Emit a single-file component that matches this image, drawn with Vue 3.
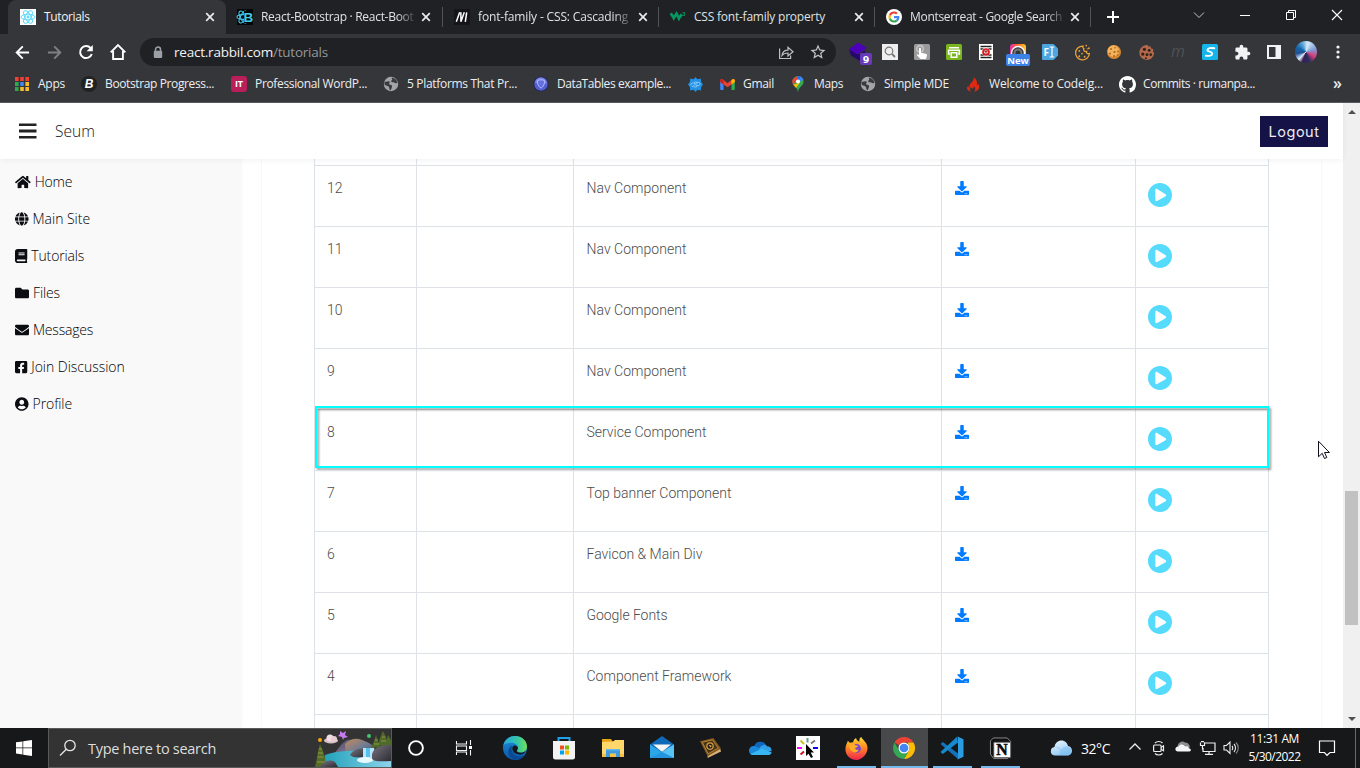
<script setup>
import { h } from 'vue'

const FA = (d, fill = 'currentColor') => `<path fill="${fill}" d="${d}"/>`

const art = {
  home: ['0 0 576 512', FA('M280.37 148.26L96 300.11V464a16 16 0 0 0 16 16l112.06-.29a16 16 0 0 0 15.92-16V368a16 16 0 0 1 16-16h64a16 16 0 0 1 16 16v95.64a16 16 0 0 0 16 16.05L464 480a16 16 0 0 0 16-16V300L295.67 148.26a12.19 12.19 0 0 0-15.3 0zM571.6 251.47L488 182.56V44.05a12 12 0 0 0-12-12h-56a12 12 0 0 0-12 12v72.61L318.47 43a48 48 0 0 0-61 0L4.34 251.47a12 12 0 0 0-1.6 16.9l25.5 31A12 12 0 0 0 45.15 301l235.22-193.74a12.19 12.19 0 0 1 15.3 0L530.9 301a12 12 0 0 0 16.9-1.6l25.5-31a12 12 0 0 0-1.7-16.93z')],
  globe: ['0 0 496 512', FA('M336.5 160C322 70.7 287.8 8 248 8s-74 62.7-88.5 152h177zM152 256c0 22.2 1.2 43.5 3.3 64h185.3c2.1-20.5 3.3-41.8 3.3-64s-1.2-43.5-3.3-64H155.3c-2.1 20.5-3.3 41.8-3.3 64zm324.7-96c-28.6-67.9-86.5-120.4-158-141.6 24.4 33.8 41.2 84.7 50 141.6h108zM177.2 18.4C105.8 39.6 47.8 92.1 19.3 160h108c8.7-56.9 25.5-107.8 49.9-141.6zM487.4 192H372.7c2.1 21 3.3 42.5 3.3 64s-1.2 43-3.3 64h114.6c5.5-20.5 8.6-41.8 8.6-64s-3.1-43.5-8.5-64zM120 256c0-21.5 1.2-43 3.3-64H8.6C3.2 212.5 0 233.8 0 256s3.2 43.5 8.6 64h114.6c-2-21-3.2-42.5-3.2-64zm39.5 96c14.5 89.3 48.7 152 88.5 152s74-62.7 88.5-152h-177zm159.3 141.6c71.4-21.2 129.4-73.7 158-141.6h-108c-8.8 56.9-25.6 107.8-50 141.6zM19.3 352c28.6 67.9 86.5 120.4 158 141.6-24.4-33.8-41.2-84.7-50-141.6h-108z')],
  book: ['0 0 448 512', FA('M448 360V24c0-13.3-10.7-24-24-24H96C43 0 0 43 0 96v320c0 53 43 96 96 96h328c13.3 0 24-10.7 24-24v-16c0-7.5-3.5-14.3-8.9-18.7-4.2-15.4-4.2-59.3 0-74.7 5.4-4.3 8.9-11.1 8.9-18.6zM128 134c0-3.3 2.7-6 6-6h212c3.3 0 6 2.7 6 6v20c0 3.3-2.7 6-6 6H134c-3.3 0-6-2.7-6-6v-20zm0 64c0-3.3 2.7-6 6-6h212c3.3 0 6 2.7 6 6v20c0 3.3-2.7 6-6 6H134c-3.3 0-6-2.7-6-6v-20zm253.4 250H96c-17.7 0-32-14.3-32-32 0-17.6 14.4-32 32-32h285.4c-1.9 17.1-1.9 46.9 0 64z')],
  folder: ['0 0 512 512', FA('M464 128H272l-64-64H48C21.49 64 0 85.49 0 112v288c0 26.51 21.49 48 48 48h416c26.51 0 48-21.49 48-48V176c0-26.51-21.49-48-48-48z')],
  envelope: ['0 0 512 512', FA('M502.3 190.8c3.9-3.1 9.7-.2 9.7 4.7V400c0 26.5-21.5 48-48 48H48c-26.5 0-48-21.5-48-48V195.6c0-5 5.7-7.8 9.7-4.7 22.4 17.4 52.1 39.5 154.1 113.6 21.1 15.4 56.7 47.8 92.2 47.6 35.7.3 72-32.8 92.3-47.6 102-74.1 131.6-96.3 154-113.7zM256 320c23.2.4 56.6-29.2 73.4-41.4 132.7-96.3 142.8-104.7 173.4-128.7 5.8-4.5 9.2-11.5 9.2-18.9v-19c0-26.5-21.5-48-48-48H48c-26.5 0-48 21.5-48 48v19c0 7.4 3.4 14.3 9.2 18.9 30.6 23.9 40.7 32.4 173.4 128.7 16.8 12.2 50.2 41.8 73.4 41.4z')],
  facebook: ['0 0 448 512', FA('M400 32H48A48 48 0 0 0 0 80v352a48 48 0 0 0 48 48h137.25V327.69h-63V256h63v-54.64c0-62.15 37-96.48 93.67-96.48 27.14 0 55.52 4.84 55.52 4.84v61h-31.27c-30.81 0-40.42 19.12-40.42 38.73V256h68.78l-11 71.69h-57.78V480H400a48 48 0 0 0 48-48V80a48 48 0 0 0-48-48z')],
  user: ['0 0 496 512', FA('M248 8C111 8 0 119 0 256s111 248 248 248 248-111 248-248S385 8 248 8zm0 96c48.6 0 88 39.4 88 88s-39.4 88-88 88-88-39.4-88-88 39.4-88 88-88zm0 344c-58.7 0-111.3-26.6-146.5-68.2 18.8-35.4 55.6-59.8 98.5-59.8 2.4 0 4.8.4 7.1 1.1 13 4.2 26.6 6.9 40.9 6.9 14.3 0 28-2.7 40.9-6.9 2.3-.7 4.7-1.1 7.1-1.1 42.9 0 79.7 24.4 98.5 59.8C359.3 421.4 306.7 448 248 448z')],
  download: ['0 0 512 512', FA('M216 0h80c13.3 0 24 10.7 24 24v168h87.7c17.8 0 26.7 21.5 14.1 34.1L269.7 378.3c-7.5 7.5-19.8 7.5-27.3 0L90.1 226.1c-12.6-12.6-3.7-34.1 14.1-34.1H192V24c0-13.3 10.7-24 24-24zm296 376v112c0 13.3-10.7 24-24 24H24c-13.3 0-24-10.7-24-24V376c0-13.3 10.7-24 24-24h146.7l49 49c20.1 20.1 52.5 20.1 72.6 0l49-49H488c13.3 0 24 10.7 24 24zm-124 88c0-11-9-20-20-20s-20 9-20 20 9 20 20 20 20-9 20-20zm64 0c0-11-9-20-20-20s-20 9-20 20 9 20 20 20 20-9 20-20z', '#007bff')],
  play: ['8 8 496 496', FA('M256 8C119 8 8 119 8 256s111 248 248 248 248-111 248-248S393 8 256 8zm115.7 272l-176 101c-15.8 8.8-35.7-2.5-35.7-21V152c0-18.4 19.8-29.8 35.7-21l176 107c16.4 9.2 16.4 32.9 0 42z', '#56dbfd')],
  menu: ['0 0 18 16', '<path fill="#232323" d="M0 .5h17.500v2.6H0zM0 6.6h17.500v2.8H0zM0 12.9h17.500v2.6H0z"/>'],
  cursor: ['0 0 14 20', '<path fill="#fff" stroke="#10101c" d="M1.5 1.2v15.6l3.7-3.5 2.3 5.2 2.3-1-2.3-5h4.9z"/>'],

  react: ['0 0 16 16', '<path fill="#fff" d="M0 0h16v16H0z"/><g fill="none" stroke="#61dafb"><ellipse cx="8" cy="8" rx="7" ry="2.8"/><ellipse cx="8" cy="8" rx="7" ry="2.8" transform="rotate(60 8 8)"/><ellipse cx="8" cy="8" rx="7" ry="2.8" transform="rotate(120 8 8)"/></g><circle cx="8" cy="8" r="1.4" fill="#61dafb"/>'],
  rbs: ['0 0 16 16', '<path fill="#050708" d="M0 0h16v16H0z"/><g fill="none" stroke="#41c9e6" stroke-width="1.1"><ellipse cx="6" cy="8" rx="6" ry="2.4"/><ellipse cx="6" cy="8" rx="6.6" ry="2.6" transform="rotate(62 6 8)"/><ellipse cx="6" cy="8" rx="6.6" ry="2.6" transform="rotate(118 6 8)"/></g><path fill="#050708" d="M7 2h9v12H7z"/><text x="6.500" y="13" font-family="Liberation Sans" font-size="13.500" font-weight="700" fill="#41c9e6">B</text>'],
  mdn: ['0 0 16 16', '<path fill="#15141a" d="M0 0h16v16H0z"/><path fill="none" stroke="#fff" stroke-width="1.500" d="M2.300 12.800L5.700 3.300M6.900 12.800V3.300M6.900 12.800L10.300 3.300M11.300 12.800L12.700 3.300"/>'],
  w3: ['0 0 17 16', '<path fill="none" stroke="#059862" stroke-width="2.900" stroke-linejoin="miter" d="M.8 4l3.200 5 2.900-4.500L9.500 9.500 12.500 5"/><path fill="#059862" d="M2.500 7h2.500l-1 5.500zM8 7h3l-1.500 6z"/><text x="13" y="6.600" font-family="Liberation Sans" font-size="6" font-weight="700" fill="#059862">3</text>'],
  google: ['0 0 48 48', '<circle cx="24" cy="24" r="24" fill="#fff"/><g transform="translate(7.2 7.2) scale(.7)"><path fill="#EA4335" d="M24 9.5c3.54 0 6.71 1.22 9.21 3.6l6.85-6.85C35.9 2.38 30.47 0 24 0 14.62 0 6.51 5.38 2.56 13.22l7.98 6.19C12.43 13.72 17.74 9.5 24 9.5z"/><path fill="#4285F4" d="M46.98 24.55c0-1.57-.15-3.09-.38-4.55H24v9.02h12.94c-.58 2.96-2.26 5.48-4.78 7.18l7.73 6c4.51-4.18 7.09-10.36 7.09-17.65z"/><path fill="#FBBC05" d="M10.53 28.59c-.48-1.45-.76-2.99-.76-4.59s.27-3.14.76-4.59l-7.98-6.19C.92 16.46 0 20.12 0 24c0 3.88.92 7.54 2.56 10.78l7.97-6.19z"/><path fill="#34A853" d="M24 48c6.48 0 11.93-2.13 15.89-5.81l-7.73-6c-2.15 1.45-4.92 2.3-8.16 2.3-6.26 0-11.57-4.22-13.47-9.91l-7.98 6.19C6.51 42.62 14.62 48 24 48z"/></g>'],
  x: ['0 0 10 10', '<path stroke="#e8eaed" stroke-width="1.7" d="M1.2 1.2l7.6 7.6M8.8 1.2L1.2 8.8"/>'],
  plus: ['0 0 12 12', '<path stroke="#fff" stroke-width="2" d="M6 0v12M0 6h12"/>'],
  chev: ['0 0 12 12', '<path fill="none" stroke="#c4c5c7" d="M1 3.5l5 5 5-5"/>'],
  min: ['0 0 12 12', '<path stroke="#fff" d="M1 6.5h10"/>'],
  restore: ['0 0 12 12', '<path fill="none" stroke="#fff" d="M1.5 3.5h7v7h-7zM3.5 3.5v-2h7v7h-2"/>'],
  close: ['0 0 12 12', '<path stroke="#fff" stroke-width="1.1" d="M1 1l10 10M11 1L1 11"/>'],

  back: ['0 0 16 16', '<path fill="none" stroke="#fff" stroke-width="2" d="M15 8H2.5M8.3 1.5L1.8 8l6.500 6.500"/>'],
  fwd: ['0 0 16 16', '<path fill="none" stroke="#7f8083" stroke-width="2" d="M1 8h12.500M7.700 1.500L14.200 8l-6.500 6.500"/>'],
  reload: ['0 0 16 16', '<path fill="none" stroke="#fff" stroke-width="2" d="M13.800 10A6 6 0 1 1 12.600 4"/><path fill="#fff" d="M14.800 1v6.200H8.600z"/>'],
  house: ['0 0 18 18', '<path fill="none" stroke="#fff" stroke-width="1.900" d="M1.700 9.300L9 2l7.300 7.300M4.100 8v8h9.800V8"/>'],
  lock: ['0 0 10 13', '<path fill="none" stroke="#9aa0a6" stroke-width="1.500" d="M2.500 6V3.600a2.500 2.500 0 0 1 5 0V6"/><rect x=".8" y="4.800" width="8.400" height="7.200" rx="1" fill="#9aa0a6"/>'],
  share: ['0 0 16 16', '<g fill="none" stroke="#bdc1c6" stroke-width="1.200"><path d="M1.600 4.500v10h11v-3"/><path d="M4 11.500c.5-3.600 2.500-5.300 6-5.300V3.300l5 4.400-5 4.300V9C7.500 9 5.500 9.600 4 11.500z"/></g>'],
  star: ['0 0 24 24', FA('M22 9.240l-7.190-.62L12 2 9.190 8.630 2 9.240l5.460 4.730L5.820 21 12 17.270 18.180 21l-1.630-7.030L22 9.240zM12 15.400l-3.760 2.270 1-4.280-3.320-2.880 4.380-.38L12 6.100l1.710 4.040 4.380.38-3.320 2.880 1 4.280L12 15.400z', '#c4c7ca')],

  layers: ['0 0 24 24', '<path fill="#25086b" d="M1 7.500l10 5 6-4v5l-6 5-8-5z"/><path fill="#4c00b8" d="M10 .5l9 5.500-10 6.500L1 7z"/><rect x="12" y="11" width="12" height="12" rx="2" fill="#673ab7"/><text x="18" y="20.500" font-family="DejaVu Sans" font-size="9.500" font-weight="700" text-anchor="middle" fill="#fff">9</text>'],
  lens: ['0 0 16 16', '<path fill="#eee" d="M0 0h16v16H0z"/><circle cx="7" cy="7" r="3.800" fill="none" stroke="#777" stroke-width="1.200"/><path stroke="#777" stroke-width="1.800" d="M10 10l3 3"/>'],
  hand: ['0 0 16 16', '<rect width="16" height="16" rx="1.500" fill="#9b9b9b"/><circle cx="6" cy="4.800" r="3.300" fill="none" stroke="#c9c9c9" stroke-width="1.300"/><path fill="#fff" d="M5 4.800c0-1.500 2-1.500 2 0v4l4.700.9c1.200.3 1.400 1 1.200 2L12 15H6.500L3 11.500c-.5-1 .5-1.600 1.200-1l.8.800z"/>'],
  printer: ['0 0 16 16', '<rect width="16" height="16" rx="1.500" fill="#79b51d"/><path fill="none" stroke="#fff" stroke-width="1.500" d="M3 3.700h10M4 10H2.600V6.200h10.800V10H12M5.200 8.700h5.600v4.600H5.200z"/>'],
  blocker: ['0 0 14 16', '<path fill="#fff" d="M0 0h14v16H0z"/><path stroke="#222" stroke-width="1.300" d="M1.500 2.500h11M1.500 5h11M1.500 11h11M1.500 13.500h11"/><circle cx="7" cy="8" r="4.400" fill="#fff"/><circle cx="7" cy="8" r="3" fill="#ddd" stroke="#d31920" stroke-width="1.700"/><path stroke="#d31920" stroke-width="1.300" d="M5.500 6.500l3 3M8.500 6.500l-3 3"/>'],
  camera: ['0 0 24 24', '<defs><linearGradient id="cam"><stop stop-color="#e62ca6"/><stop offset=".5" stop-color="#ff6c24"/><stop offset="1" stop-color="#ffcd2e"/></linearGradient></defs><rect x="4" y="0" width="16" height="16" rx="3" fill="url(#cam)"/><circle cx="12" cy="9" r="6.500" fill="#35363a" stroke="#fff" stroke-width="1.400"/><circle cx="12" cy="9" r="3.500" fill="none" stroke="#777" stroke-width="2"/><rect x="0" y="10" width="24" height="12" rx="1.800" fill="#3b82e8"/><text x="12" y="19.500" font-family="Open Sans" font-size="9.500" font-weight="700" text-anchor="middle" fill="#fff">New</text>'],
  fi: ['0 0 16 16', '<path fill="#4da6e0" d="M1 0h10.500L16 4.500v7L11.500 16H1a1 1 0 0 1-1-1V1a1 1 0 0 1 1-1z"/><text x="1.500" y="11.700" font-family="Open Sans" font-size="10" font-weight="700" fill="#fff">F</text><path fill="none" stroke="#fff" stroke-width="1.200" d="M7.700 3h4.600M7.700 13h4.600M10 3v10"/>'],
  cookieLine: ['0 0 16 16', '<path fill="none" stroke="#e8a33a" stroke-width="1.200" d="M8.500 2A6.500 6.500 0 1 0 14.500 9c-2 .5-3-.5-2.700-2-2 .4-3.300-1-2.500-2.700C8.200 4 8 3 8.500 2z"/><g fill="#e8a33a"><circle cx="5" cy="6.500" r=".9"/><circle cx="7.500" cy="9" r=".8"/><circle cx="5" cy="11.500" r=".9"/><circle cx="10" cy="12" r=".9"/><circle cx="11.500" cy="1.500" r=".8"/><circle cx="14" cy="4" r=".9"/><circle cx="12.500" cy="4.500" r=".6"/></g>'],
  cookie: ['0 0 16 16', '<circle cx="8" cy="8" r="7" fill="#d98a2f"/><circle cx="7.300" cy="7" r="5.700" fill="#f2b35a"/><g fill="#a8601f"><circle cx="5" cy="5" r=".9"/><circle cx="9" cy="3.800" r=".8"/><circle cx="8.500" cy="8" r="1.100"/><circle cx="4" cy="9.500" r=".9"/><circle cx="12" cy="7.500" r=".9"/><circle cx="8" cy="12" r=".9"/><circle cx="11.500" cy="11" r=".8"/></g>'],
  cookieBite: ['0 0 16 16', '<path fill="#b5694b" d="M9 1l1 1.500 2-.5 0 2 2.500 1-.5 2 1.200 1.500A7 7 0 1 1 9 1z"/><g fill="#2f211c"><circle cx="6" cy="5" r="1.500"/><circle cx="10.500" cy="6" r="1.400"/><circle cx="4.500" cy="9.500" r="1.500"/><circle cx="8.500" cy="10" r="1.400"/><circle cx="12" cy="10" r="1.200"/><circle cx="7.500" cy="13.300" r=".9"/></g>'],
  m: ['0 0 16 16', '<text x="8" y="12.500" font-family="Open Sans" font-size="16" font-style="italic" text-anchor="middle" fill="#505154">m</text>'],
  s: ['0 0 16 16', '<rect width="16" height="16" rx="1.500" fill="#13b5ea"/><path fill="none" stroke="#fff" stroke-width="1.900" stroke-linecap="round" d="M12.300 4.300C9 3.600 5.500 4 5.300 6c-.2 1.600 5 1.600 5 3.500 0 2.200-3.500 2.600-6.500 2.200"/>'],
  puzzle: ['0 0 24 24', FA('M20.500 11H19V7c0-1.100-.9-2-2-2h-4V3.500C13 2.120 11.880 1 10.500 1S8 2.120 8 3.500V5H4c-1.100 0-1.990.9-1.990 2v3.800H3.500c1.490 0 2.700 1.210 2.700 2.700s-1.210 2.700-2.700 2.700H2V20c0 1.100.9 2 2 2h3.800v-1.500c0-1.490 1.210-2.700 2.700-2.700 1.490 0 2.700 1.210 2.700 2.700V22H17c1.100 0 2-.9 2-2v-4h1.500c1.380 0 2.500-1.120 2.500-2.500S21.880 11 20.500 11z', '#f1f3f4')],
  panel: ['0 0 14 14', '<path fill="#f1f3f4" fill-rule="evenodd" d="M0 0h14v14H0zM2 2v10h6.500V2z"/>'],
  dots: ['0 0 4 16', '<g fill="#f1f3f4"><circle cx="2" cy="3" r="1.600"/><circle cx="2" cy="8" r="1.600"/><circle cx="2" cy="13" r="1.600"/></g>'],

  apps: ['0 0 14 14', '<path fill="#ee4035" d="M0 0h3.600v4H0zM5.200 0h3.600v4H5.200zM10.400 0H14v4h-3.600z"/><path fill="#2ea94f" d="M0 5h3.600v4H0zM0 10h3.600v4H0z"/><path fill="#4285f4" d="M5.200 5h3.600v4H5.200z"/><path fill="#f9bb2d" d="M10.400 5H14v4h-3.600zM5.200 10h3.600v4H5.200zM10.400 10H14v4h-3.600z"/>'],
  b: ['0 0 16 16', '<circle cx="8" cy="8" r="8" fill="#222"/><text x="8" y="12.300" font-family="Liberation Sans" font-size="12" font-weight="700" font-style="italic" text-anchor="middle" fill="#fff">B</text>'],
  it: ['0 0 16 16', '<rect width="16" height="16" rx="3" fill="#b9205b"/><text x="8" y="11" font-family="Open Sans" font-size="9" font-weight="700" text-anchor="middle" fill="#fff">IT</text>'],
  world: ['0 0 16 16', '<circle cx="8" cy="8" r="7.200" fill="#a1a5aa"/><path fill="#393b3f" d="M1.800 5.500c1.500.5 2.800-.3 4-.2 1 0 1.300 1 .6 1.800s-.3 1.700.9 1.700 2 .7 1.700 2-.9 2-1 3.500c-1.500-.3-1.900-1.600-1.900-2.800S4.500 9.700 3 9.400 1 8 1.800 5.500zM9 1.500l3 1.200c1.700 1.100 2.200 2.600 2.300 4-1 .8-2.300.6-3.200-.1s-2.400.2-2.800-.8.8-1.300.9-2.200S8.300 2.500 9 1.500z"/>'],
  dt: ['0 0 16 16', '<circle cx="8" cy="8" r="7.200" fill="#5360d3" stroke="#24284e"/><path fill="#7b86e8" d="M8 1.500a6.500 6.500 0 0 1 6 6L2 7a6.500 6.500 0 0 1 6-5.500z"/><path fill="#6670dc" stroke="#c3c8ff" stroke-width=".8" d="M4.500 4.600c2-1 5-1 7 0 .4 3.300-1 6-3.500 7.600-2.500-1.600-3.900-4.300-3.500-7.600z"/>'],
  flower: ['0 0 16 16', '<path fill="#2492e4" d="M8 0l2 2.300 3.600-.6.400 3.600L16 8l-2 2.700-.4 3.600-3.600-.6L8 16l-2-2.300-3.600.6L2 10.700 0 8l2-2.700.4-3.600 3.600.6z"/><path fill="none" stroke="#a9dcff" stroke-width=".8" d="M3 8.500c0-2.500 3.500-2.800 5-.8s4 2 5-.3c0-2-3-2.500-4.500-.5s-3.500 4-4.700 2.600M6.500 5.800c1.500-1 3.500-.5 3.500 1M6 10.200c1.500 1 4 .5 4-1.500"/>'],
  gmail: ['0 0 16 12', '<path fill="#4285f4" d="M0 2v9a1 1 0 0 0 1 1h2.700V4.700z"/><path fill="#34a853" d="M12.300 4.700V12H15a1 1 0 0 0 1-1V2z"/><path fill="#ea4335" d="M0 1.500C.4 0 2-.3 3 .6l5 4 5-4c1-.9 2.600-.6 3 .9v1.800L8 9 0 3.300z"/><path fill="#fbbc04" d="M12.300 1.200L14 0c1.200 0 2 .8 2 2v1.300l-3.700 2.700z"/><path fill="#c5221f" d="M3.700 1.200L2 0C.8 0 0 .8 0 2v1.300L3.700 6z"/>'],
  maps: ['0 0 12 16', '<path fill="#34a853" d="M6 0a5.600 5.600 0 0 0-5.600 5.600C.4 10 5 10.500 6 16c1-5.500 5.600-6 5.600-10.400A5.600 5.600 0 0 0 6 0z"/><path fill="#fbbc04" d="M1 8.500L7.700 7 4 12z"/><path fill="#4285f4" d="M6 0a5.600 5.600 0 0 1 5.300 4L6 6z"/><path fill="#1a73e8" d="M6 0a5.600 5.600 0 0 1 2.800.8L4 7z"/><path fill="#ea4335" d="M1.700 2L6 0 4.600 5.500 1 8.300A5.600 5.600 0 0 1 1.700 2z"/><circle cx="6" cy="5.500" r="2.100" fill="#fff"/>'],
  flame: ['0 0 14 16', '<path fill="#dd2a11" d="M7.500 1c.8 3-1 4-2.500 6S3 10 3.500 12c-.8-.5-1.300-1.400-1-2.500C-.5 12 1.500 15 5 15.500c-1.500-1-1.500-3 0-4.500 0 1 .5 1.500 1.500 1.500 1.500 0 1.500-1.500 1-2.500C9.500 11 10 14 8 15.500c5-.5 6.500-4.500 4-8 0 1-.3 1.500-1 1.700C11.500 6 10.500 3 7.500 1z"/>'],
  github: ['0 0 16 16', FA('M8 0C3.580 0 0 3.580 0 8c0 3.540 2.290 6.530 5.470 7.590.4.070.55-.17.55-.38 0-.19-.01-.82-.01-1.490-2.010.37-2.530-.49-2.690-.94-.09-.23-.48-.94-.82-1.130-.28-.15-.68-.52-.01-.53.63-.01 1.080.58 1.230.82.72 1.210 1.870.87 2.330.66.07-.52.28-.87.51-1.070-1.780-.2-3.640-.89-3.640-3.950 0-.87.31-1.590.82-2.150-.08-.2-.36-1.020.08-2.120 0 0 .67-.21 2.200.82.64-.18 1.320-.27 2-.27s1.360.09 2 .27c1.530-1.040 2.200-.82 2.200-.82.44 1.100.16 1.920.08 2.120.51.56.82 1.270.82 2.150 0 3.070-1.870 3.750-3.650 3.950.29.25.54.73.54 1.480 0 1.070-.01 1.930-.01 2.200 0 .21.15.46.55.38A8.010 8.010 0 0 0 16 8c0-4.420-3.580-8-8-8z', '#fff')],

  win: ['0 0 16 16', '<path fill="#fff" d="M0 2.300l6.500-.9v6.200H0zM7.200 1.300L16 0v7.600H7.200zM0 8.300h6.500v6.200L0 13.600zM7.200 8.300H16V16l-8.800-1.300z"/>'],
  search: ['0 0 18 18', '<circle cx="11" cy="6.500" r="5.200" fill="none" stroke="#e6e6e6" stroke-width="1.300"/><path stroke="#e6e6e6" stroke-width="1.300" d="M7.300 10.200L1 16.500"/>'],
  scene: ['0 0 77 38', '<defs><linearGradient id="mt" x2="1" y2="1"><stop stop-color="#c58a5a"/><stop offset=".5" stop-color="#6f7b93"/><stop offset="1" stop-color="#384259"/></linearGradient><linearGradient id="mt2" x2="1" y2="1"><stop stop-color="#3e4c68"/><stop offset=".6" stop-color="#846f8e"/><stop offset="1" stop-color="#54526b"/></linearGradient><linearGradient id="wa" x2="1"><stop stop-color="#1fa2b8"/><stop offset="1" stop-color="#8fd3ee"/></linearGradient><linearGradient id="rk" x2="1" y2="1"><stop stop-color="#7a7683"/><stop offset="1" stop-color="#2a2930"/></linearGradient></defs><path fill="url(#mt2)" d="M17 27c6-6 9-13 15-16 6-2 10 2 13 6l6 10z"/><path fill="url(#mt)" d="M30 15c6-6 12-6 17-4s10 3 14 10l-6 5-24 2z"/><path fill="url(#wa)" d="M10 26c12-5 30-4 45-5l22 10v7H8z"/><path fill="url(#rk)" d="M35 26c3-6 10-7 15-6l-1 9c-5-2-9 1-14-3z"/><path fill="#b4e5fa" d="M48 19h11v13H48z"/><path fill="#54c1ea" d="M51 19h4v9h-4z"/><path fill="url(#rk)" d="M57 25c2-7 11-10 20-10v17c-8 0-14 1-20-1z"/><ellipse cx="50" cy="31" rx="8" ry="3" fill="#e8f8ff"/><path fill="#556b2a" d="M5 15l3 7 2 7 1 9H0l2-9 1-7z"/><path stroke="#8c9a3c" stroke-width="1.200" d="M4 20h3M3 24h5M2.500 28h6M2 33h8"/><path fill="#4f6a2a" d="M61 6l2 6 3 6-10 1 3-7zM68 2l3 6 2 8-10 1 2-8zM73 6l3 5v5h-6z"/><path stroke="#87963a" d="M60 11h3M59 15h5M67 8h3M66 12h5"/><path fill="url(#rk)" d="M5 38c3-6 10-8 15-5l3 5z"/><ellipse cx="16" cy="11.500" rx="7" ry="3" fill="#d8bfc8"/><circle cx="15" cy="9" r="3.500" fill="#f0dde2"/><circle cx="19" cy="10" r="3" fill="#e8ccd3"/><path fill="#c77af0" d="M25 2l3 2 3-2-1 4 3 2-4 1-1 2-1-3-4-1 2-2z"/><circle cx="5" cy="11" r="2" fill="#f7a80d"/><circle cx="54" cy="7" r="2" fill="#43c66f"/>'],
  cortana: ['0 0 18 18', '<circle cx="9" cy="9" r="6.900" fill="none" stroke="#fff" stroke-width="1.900"/>'],
  taskview: ['0 0 18 18', '<g fill="none" stroke="#f4f4f4" stroke-width="1.100"><path d="M1.500 2v3h10V2M1.500 16v-3h10v3M1.500 7h10v4.500h-10zM15.500 1v5M15.500 11v5.500"/></g><path fill="#fff" d="M14 7h3v3h-3z"/>'],
  edge: ['0 0 24 24', '<defs><linearGradient id="e1" x2="1"><stop stop-color="#28a7df"/><stop offset=".6" stop-color="#34c7a7"/><stop offset="1" stop-color="#72df55"/></linearGradient><linearGradient id="e2" y2="1" x2="0"><stop stop-color="#1c92dc"/><stop offset="1" stop-color="#0c56a4"/></linearGradient></defs><circle cx="12" cy="12" r="12" fill="url(#e2)"/><path fill="url(#e1)" d="M.2 10C1.200 4 6 0 12 0c7 0 12 5 12 10.500 0 4-3 6-6.500 6-3 0-4-1.500-3.400-2.300.8-1 .9-1.700.9-2.500 0-2.500-3-5-6.500-5C4.500 6.700 1.200 8 .2 10z"/><path fill="#0a4a94" d="M8.500 12.500c0 4 3.500 8 8 8 2.500 0 4.500-.8 5.700-2C20 22 16.500 24 12.500 24 8 23 5 19.500 5.500 15c.3-3 2-5 4-6-.8 1-1 2-1 3.500z"/><path fill="#161718" d="M9.700 10.500c1.300-1.800 4.300-1 5 .8.500 1.200-.2 2.200-.7 3-.7 1.200.8 2.500 3.700 2.500 2 0 3.700-.7 4.800-1.800-.5 1.800-2.500 3.400-5.300 3.500-5 .2-9.200-3.500-7.500-8z"/>'],
  store: ['0 0 24 24', '<path fill="none" stroke="#21a0e8" stroke-width="2" d="M6.500 6V2h11v4"/><path fill="#f2f2f2" d="M1 5h22v16a2.500 2.500 0 0 1-2.500 2.500h-17A2.500 2.500 0 0 1 1 21z"/><path fill="#f25022" d="M8 9.500h4v4H8z"/><path fill="#7fba00" d="M13 9.500h4v4h-4z"/><path fill="#00a4ef" d="M8 14.500h4v4H8z"/><path fill="#ffb900" d="M13 14.500h4v4h-4z"/>'],
  explorer: ['0 0 24 24', '<path fill="#e8a317" d="M1 3h9l2 3H1z"/><path fill="#ffd76b" d="M1 6l11-.5 2-1.500h9v17H1z"/><path fill="#f6c042" d="M1 18h22v3H1z"/><path fill="#3f9ae0" d="M5 13h14v8h-4v-3.500H9V21H5z"/><path fill="#62b7f0" d="M5 13h14v1.500H5z"/>'],
  mail: ['0 0 24 24', '<path fill="#1068b8" d="M0 8.500L12 0l12 8.500v6H0z"/><path fill="#f5f5f5" d="M3 8.500h18L12 16z"/><path fill="#2aa5e8" d="M0 8.500L12 16l12-7.500V22H0z"/><path fill="#58c3f5" d="M24 8.500V22L12 16z"/><path fill="#1b83d2" d="M0 22l12-6 12 6z" opacity=".5"/>'],
  koran: ['0 0 24 24', '<path fill="#d9b27a" d="M9 22l14-7-1-3L9 19z"/><path fill="#80561f" d="M1 4.500L15 1l8 11-14 8z"/><path fill="#453416" stroke="#c99437" stroke-width=".8" d="M3.500 5.500L14 3l6 8.500-10.500 6z"/><circle cx="11.500" cy="9.500" r="3.300" fill="#212020" stroke="#d49e42" stroke-width="1.300"/><path fill="#e5ac4e" d="M10 8l3.500 1-1.500 2z"/>'],
  onedrive: ['0 0 24 16', '<path fill="#0f66bd" d="M6 7a6.500 6.500 0 0 1 12-2l-6 6z"/><path fill="#1b87d8" d="M1 10.500A4.500 4.500 0 0 1 6 6c2 0 3.500 1 5 2l7 5-14 1.500C2 14.500 1 12.500 1 10.500z"/><path fill="#2f9fe8" d="M11 9c1-3 4-4.700 7-4 1 2 0 0 1 1.300 3 0 5 2 4.500 5L14 12z"/><path fill="#38b5f3" d="M2.500 14L14 8.500l9.700 4C23 14.500 21.500 15 20 15H5c-1 0-2-.3-2.500-1z"/>'],
  click: ['0 0 24 24', '<path fill="#fff" d="M0 0h24v24H0z"/><g stroke-width="2"><path stroke="#679f8f" d="M11.500 2v4.500"/><path stroke="#7b7b80" d="M15 7.500L19 4.500"/><path stroke="#c7c321" d="M4.500 4.500l3.500 3.500"/><path stroke="#f0f" d="M1 12h5"/><path stroke="#1200ef" d="M17 12h5"/><path stroke="#cd1420" d="M4.500 18.500L8 15.500"/></g><path fill="#050505" d="M10 8v12l2.500-2.200L15 22l2-1-2.300-4.500H18z"/>'],
  firefox: ['0 0 24 24', '<defs><linearGradient id="ff" x2="0" y2="1"><stop stop-color="#ffdb38"/><stop offset=".45" stop-color="#ff8b22"/><stop offset="1" stop-color="#ef244f"/></linearGradient></defs><path fill="url(#ff)" d="M1.500 7.500L3 4l2 2 3.500-.5C9 3 10 2 11.500 1c.5 2 1.500 3 3.500 4C15 2 15 1 17 0c1 3 6 5 6.500 11S18 24 12 24 .5 19.500.5 13c0-2 .3-4 1-5.500z"/><circle cx="12" cy="12" r="4.600" fill="#7547d4"/><path fill="#ffac28" d="M4 8c2-2 5-1.300 7 .7l2.500.3c-.3 1.500-1.700 2-3 2.500 0 1.500 2 2.500 4 1.500-1 3-4 4-6.500 2.500S4 11 4 8z"/>'],
  chrome: ['0 0 48 48', '<path fill="#ea4335" d="M24 2a22 22 0 0 1 19.100 11H24a11 11 0 0 0-9.500 5.500L5 13A22 22 0 0 1 24 2z"/><path fill="#fbbc04" d="M43.100 13A22 22 0 0 1 24 46l9.500-16.500A11 11 0 0 0 33.500 18L31 13z"/><path fill="#34a853" d="M5 13a22 22 0 0 0 19 33l9.500-16.500a11 11 0 0 1-19 0z"/><circle cx="24" cy="24" r="11" fill="#fff"/><circle cx="24" cy="24" r="8.700" fill="#4285f4"/>'],
  vscode: ['0 0 24 24', '<path fill="#1273b8" d="M.5 8l2.300-2L18 17.500V23z"/><path fill="#168ace" d="M.5 16L17 .8 18 6.500 2.800 18z"/><path fill="#2b9cdf" d="M17 .3L23.500 3.200v17.600L17 23.700c1-.5 1-1.500 1-2.500V2.800c0-1-.3-2-1-2.500z"/>'],
  notion: ['0 0 24 24', '<path fill="#111" stroke="#aaa" stroke-width=".8" d="M1.500 4l3-3H19l3.500 3.500V19l-3 3.500H5L1.500 18z"/><path fill="#fff" stroke="#555" stroke-width=".8" d="M5 5.500h17.500V21.500H5z"/><text x="13.500" y="19.200" font-family="Liberation Serif" font-size="16.500" font-weight="700" text-anchor="middle" fill="#090909" stroke="#090909" stroke-width=".5">N</text>'],
  weather: ['0 0 22 16', '<defs><linearGradient id="cl" x2=".5" y2="1"><stop stop-color="#eef8ff"/><stop offset="1" stop-color="#91c9f4"/></linearGradient></defs><path fill="url(#cl)" d="M4.500 15.500A4.300 4.300 0 0 1 4.500 7C5 3 8 .5 11.500.5c3.500 0 6 2.500 6.500 5.500 2.500.5 4 2.200 4 4.700 0 2.800-2 4.800-5 4.800z"/><path fill="#67aeea" opacity=".35" d="M5 7c3-.7 5 .8 6 3 1.500-3 5-4 7-3.500 4 1 4 9-1 9H5c3 0 5-1 5-4S7.500 7.500 5 7z"/>'],
  up: ['0 0 14 14', '<path fill="none" stroke="#eee" stroke-width="1.300" d="M1.500 9.500L7 4l5.500 5.500"/>'],
  meet: ['0 0 16 16', '<g fill="none" stroke="#eee" stroke-width="1.200"><rect x="2.600" y="5" width="7.500" height="6.500" rx="1"/><path d="M10 7.500l2.500-1.700v5L10 9.300M4 3c2-2 5.500-2 7.500 0M4 13.500c2 2 5.500 2 7.500 0"/></g>'],
  grayCloud: ['0 0 16 12', '<path fill="#8c8c8c" d="M2.500 7C2.500 3 7 0 10 2.500c3 0 4.500 1.500 5 5z"/><path fill="#f5f5f5" d="M3 11.500c-3.500 0-3.500-5 .5-5C5 3.500 9 4 10 6.500c3-1 4 .5 3.800 1.800 2.500 0 2.700 3.200.5 3.200z"/>'],
  net: ['0 0 17 16', '<g fill="none" stroke="#eee" stroke-width="1.200"><path d="M5 3h11v8.500H4V8M10 11.500V14M6 14.400h8"/><path d="M1.500 2.500v3h4v-3M2 1.700h3M3.500 5.500v4"/></g>'],
  speaker: ['0 0 17 16', '<g fill="none" stroke="#eee" stroke-width="1.100"><path d="M1 5.500h2.500L7 2v11.500L3.500 10H1z"/><path d="M9 6c1 1 1 3 0 4M11 4c2 2 2 6 0 8"/><path stroke="#888" d="M13 2.500c3 3 3 8 0 11"/></g>'],
  note: ['0 0 18 18', '<path fill="none" stroke="#fff" stroke-width="1.200" d="M1.500 2h15v11.500H12L9 16.300l-2.500-2.800h-5z"/>']
}

const Icon = (props) =>
  h('svg', {
    width: props.w,
    height: props.hh || props.w,
    viewBox: art[props.n][0],
    innerHTML: art[props.n][1],
    style: 'display:block;flex:none;overflow:visible'
  })
Icon.props = ['n', 'w', 'hh']

// Tracks a label out (or in) so that it occupies the given width.
const vFit = {
  mounted(el, { value }) {
    if (!value) return
    const natural = el.getBoundingClientRect().width
    el.style.letterSpacing = (value - natural) / el.textContent.trim().length + 'px'
  }
}

const tabs = [
  { icon: 'react', title: 'Tutorials', w: 45.5, active: true },
  { icon: 'rbs', title: 'React-Bootstrap · React-Boot', w: 152.5, fade: true },
  { icon: 'mdn', title: 'font-family - CSS: Cascading', w: 150, fade: true },
  { icon: 'w3', title: 'CSS font-family property', w: 131 },
  { icon: 'google', title: 'Montserreat - Google Search', w: 152, fade: true }
]
const extensions = [
  ['layers', 24], ['lens', 16], ['hand', 16], ['printer', 16], ['blocker', 14, 16], ['camera', 24], ['fi', 16],
  ['cookieLine', 17], ['cookie', 16], ['cookieBite', 17], ['m', 16], ['s', 16], ['puzzle', 17], ['panel', 14], ['avatar'], ['dots', 4, 16]
]
const bookmarks = [
  { icon: 'apps', s: 14, title: 'Apps', w: 27, slot: 67 },
  { icon: 'b', s: 16, title: 'Bootstrap Progress...', w: 109, slot: 150 },
  { icon: 'it', s: 16, title: 'Professional WordP...', w: 112, slot: 152 },
  { icon: 'world', s: 16, title: '5 Platforms That Pr...', w: 110, slot: 150 },
  { icon: 'dt', s: 16, title: 'DataTables example...', w: 114, slot: 154 },
  { icon: 'flower', s: 15, title: '', w: 0, slot: 32 },
  { icon: 'gmail', s: 15, sh: 11, title: 'Gmail', w: 31, slot: 71 },
  { icon: 'maps', s: 12, sh: 16, title: 'Maps', w: 29, slot: 70 },
  { icon: 'world', s: 16, title: 'Simple MDE', w: 65, slot: 105 },
  { icon: 'flame', s: 14, sh: 16, title: 'Welcome to CodeIg...', w: 114, slot: 154 },
  { icon: 'github', s: 17, title: 'Commits · rumanpa...', w: 112, slot: 150 }
]
const links = [
  { icon: 'home', iw: 15.75, title: 'Home', w: 37.5 },
  { icon: 'globe', iw: 13.56, title: 'Main Site', w: 57.5 },
  { icon: 'book', iw: 12.25, title: 'Tutorials', w: 53 },
  { icon: 'folder', iw: 14, title: 'Files', w: 27 },
  { icon: 'envelope', iw: 14, title: 'Messages', w: 60 },
  { icon: 'facebook', iw: 12.25, title: 'Join Discussion', w: 93.5 },
  { icon: 'user', iw: 13.56, title: 'Profile', w: 39.5 }
]
const rows = [
  [12, 'Nav Component', 100], [11, 'Nav Component', 100], [10, 'Nav Component', 100], [9, 'Nav Component', 100],
  [8, 'Service Component', 120], [7, 'Top banner Component', 145], [6, 'Favicon & Main Div', 116],
  [5, 'Google Fonts', 81], [4, 'Component Framework', 145]
]
const pinned = [['edge', 24], ['store', 24], ['explorer', 24], ['mail', 24], ['koran', 23], ['onedrive', 24, 16]]
const running = [['click', 24, ''], ['firefox', 23, 'open'], ['chrome', 24, 'open current'], ['vscode', 24, 'open'], ['notion', 23, 'open']]
const tray = [['up', 14], ['meet', 16], ['grayCloud', 16, 12], ['net', 17, 16], ['speaker', 17, 16]]
</script>

<template>
  <div class="screen">
    <div class="tabstrip">
      <div v-for="t in tabs" :key="t.title" class="tab" :class="{ active: t.active }">
        <Icon :n="t.icon" :w="16" />
        <span class="tab-title" :class="{ fade: t.fade }"><span v-fit="t.w" class="fit">{{ t.title }}</span></span>
        <Icon n="x" :w="10" />
      </div>
      <div class="newtab"><Icon n="plus" :w="12" /></div>
      <div class="controls">
        <span v-for="c in ['chev', 'min', 'restore', 'close']" :key="c"><Icon :n="c" :w="12" /></span>
      </div>
    </div>

    <div class="toolbar">
      <div class="nav">
        <span><Icon n="back" :w="15" /></span><span><Icon n="fwd" :w="15" /></span><span><Icon n="reload" :w="16" /></span><span><Icon n="house" :w="18" /></span>
      </div>
      <div class="omnibox">
        <Icon n="lock" :w="10" :hh="13" />
        <span v-fit="154" class="url fit">react.rabbil.com<i>/tutorials</i></span>
        <span class="omni-actions"><Icon n="share" :w="16" /><Icon n="star" :w="18" /></span>
      </div>
      <div class="extensions">
        <span v-for="e in extensions" :key="e[0]" :class="e[0]">
          <b v-if="e[0] === 'avatar'" class="face"></b>
          <Icon v-else :n="e[0]" :w="e[1]" :hh="e[2]" />
        </span>
      </div>
    </div>

    <div class="bookmarks">
      <div v-for="b in bookmarks" :key="b.title" class="bookmark" :style="{ width: b.slot + 'px' }">
        <span class="bm-icon"><Icon :n="b.icon" :w="b.s" :hh="b.sh" /></span>
        <span v-if="b.title" v-fit="b.w" class="fit">{{ b.title }}</span>
      </div>
      <span class="more">»</span>
    </div>

    <div class="viewport">
      <div class="page">
        <header class="header">
          <Icon n="menu" :w="18" :hh="16" />
          <span v-fit="40" class="brand fit">Seum</span>
          <button class="logout"><span v-fit="51" class="fit">Logout</span></button>
        </header>
        <div class="body">
          <aside class="sidebar">
            <a v-for="l in links" :key="l.title" class="link">
              <Icon :n="l.icon" :w="l.iw" :hh="14" /><span v-fit="l.w" class="fit">{{ l.title }}</span>
            </a>
          </aside>
          <main class="card">
            <div class="table">
              <div class="row stub"><div></div><div></div><div></div><div></div><div></div></div>
              <div v-for="r in rows" :key="r[0]" class="row">
                <div>{{ r[0] }}</div>
                <div></div>
                <div><span v-fit="r[2]" class="fit">{{ r[1] }}</span></div>
                <div><Icon n="download" :w="14" /></div>
                <div class="play"><Icon n="play" :w="24" /></div>
                <div v-if="r[0] === 8" class="marker"></div>
              </div>
              <div class="row"><div></div><div></div><div></div><div></div><div></div></div>
            </div>
          </main>
        </div>
      </div>
      <div class="scrollbar">
        <span class="arrow upward"></span><span class="thumb"></span><span class="arrow downward"></span>
      </div>
      <div class="pointer"><Icon n="cursor" :w="14" :hh="20" /></div>
    </div>

    <div class="taskbar">
      <div class="start"><Icon n="win" :w="16" /></div>
      <div class="searchbox">
        <Icon n="search" :w="18" />
        <span v-fit="128" class="fit">Type here to search</span>
        <div class="scene"><Icon n="scene" :w="77" :hh="38" /></div>
      </div>
      <div class="slot"><Icon n="cortana" :w="18" /></div>
      <div class="slot wide"><Icon n="taskview" :w="18" /></div>
      <div v-for="p in pinned" :key="p[0]" class="slot pinned"><Icon :n="p[0]" :w="p[1]" :hh="p[2]" /></div>
      <div v-for="p in running" :key="p[0]" class="slot" :class="p[2]"><Icon :n="p[0]" :w="p[1]" /></div>
      <div class="weather"><Icon n="weather" :w="22" :hh="16" /><span v-fit="29" class="fit">32°C</span></div>
      <div class="tray"><span v-for="t in tray" :key="t[0]"><Icon :n="t[0]" :w="t[1]" :hh="t[2]" /></span></div>
      <div class="clock"><span v-fit="49" class="fit">11:31 AM</span><span v-fit="52" class="fit">5/30/2022</span></div>
      <div class="note"><Icon n="note" :w="18" /></div>
      <div class="desktop"></div>
    </div>
  </div>
</template>

<style>
body { overflow: hidden; }
</style>

<style scoped>
* { box-sizing: border-box; }
.screen { width: 1360px; height: 768px; display: flex; flex-direction: column; overflow: hidden; font-family: "Open Sans", "Noto Sans", sans-serif; background: #fff; }
.fit { display: inline-block; white-space: nowrap; }

.tabstrip { height: 34px; background: #202124; display: flex; padding-left: 8px; color: #dfe1e5; font-size: 12px; flex: none; }
.tab { width: 216px; height: 34px; display: flex; align-items: center; padding: 0 11.500px 0 11px; position: relative; }
.tab.active { width: 218px; background: #35363a; border-radius: 8px 8px 0 0; color: #f1f3f4; padding: 0 11px 0 12px; }
.tab:not(.active)::after { content: ""; position: absolute; right: 0; top: 7px; width: 1px; height: 20px; background: #4f5256; }
.tab.active + .tab { width: 217px; padding-right: 12.500px; }
.tab-title { margin-left: 8px; white-space: nowrap; line-height: 20px; }
.tab-title.fade { -webkit-mask-image: linear-gradient(90deg, #000 136px, transparent 156px); mask-image: linear-gradient(90deg, #000 136px, transparent 156px); }
.tab > svg:last-child { margin-left: auto; }
.newtab { width: 44px; display: flex; align-items: center; justify-content: center; }
.controls { margin-left: auto; display: flex; height: 29px; }
.controls span { width: 46px; display: flex; align-items: center; justify-content: center; }

.toolbar { height: 34px; background: #35363a; display: flex; align-items: center; padding-top: 2px; flex: none; }
.nav { display: flex; padding-left: 6px; width: 140px; }
.nav span { width: 32px; display: flex; justify-content: center; align-items: center; }
.omnibox { width: 696px; height: 28px; border-radius: 14px; background: #202124; display: flex; align-items: center; padding: 0 9px 0 13px; }
.url { margin-left: 11px; font-size: 13.500px; line-height: 20px; color: #f1f3f4; }
.url i { font-style: normal; color: #93979c; }
.omni-actions { margin-left: auto; display: flex; align-items: center; gap: 15px; }
.extensions { display: flex; margin-left: 6px; height: 28px; align-items: center; }
.extensions span { width: 32px; display: flex; justify-content: center; align-items: center; }
.extensions .layers { padding: 3px 0 0 4px; }
.extensions .camera { padding-top: 8px; }
.face { width: 22px; height: 22px; border-radius: 50%; background: conic-gradient(from 10deg, #d7ecf9, #7f9fd8 60deg, #d63c78 110deg, #27305f 150deg, #3c1d4f 190deg, #dcebff 215deg, #244f91 250deg, #1467ad 290deg, #63abd9 330deg, #d7ecf9); }

.bookmarks { height: 35px; background: #35363a; border-bottom: 1px solid #5a5a5e; display: flex; align-items: center; padding: 0 0 2px 14px; color: #eceef0; font-size: 12px; flex: none; }
.bookmark { display: flex; align-items: center; gap: 8px; height: 20px; line-height: 20px; flex: none; }
.bm-icon { width: 16px; display: flex; justify-content: center; }
.more { margin-left: auto; padding: 0 18px 3px 0; font-size: 16px; line-height: 18px; font-weight: 600; }

.viewport { height: 625px; display: flex; position: relative; flex: none; overflow: hidden; }
.page { width: 1343px; height: 625px; display: flex; flex-direction: column; }
.header { height: 56px; flex: none; background: #fff; display: flex; align-items: center; padding: 0 15px 0 19px; position: relative; z-index: 2; box-shadow: 0 1px 6px rgba(0, 0, 0, .06); }
.brand { margin-left: 18px; font-size: 15.500px; font-weight: 300; color: #111; }
.logout { margin-left: auto; width: 68px; height: 31px; border: 0; padding: 0; background: #141247; color: #ececf2; font: 400 14.500px Inter, sans-serif; text-align: center; }
.body { display: flex; height: 569px; overflow: hidden; }
.sidebar { width: 242px; background: #f9f9f9; box-shadow: 0 0 5px rgba(0, 0, 0, .02); padding: 4px 0 0 15px; }
.link { display: flex; align-items: center; height: 37px; gap: 4px; font-size: 14px; font-weight: 300; color: #000; line-height: 20px; }
.link svg { color: #0b0d12; }
.card { margin-left: 20px; width: 1059px; padding-left: 52px; box-shadow: 0 0 2px rgba(0, 0, 0, .09); background: #fff; }
.table { width: 955px; font: 300 14px/20px Roboto, sans-serif; color: #4c4c4c; border-right: 1px solid #dee2e6; }
.row { display: grid; grid-template-columns: 102px 157px 368px 194px 133px; height: 61px; border-top: 1px solid #dee2e6; position: relative; }
.row.stub { height: 6px; border-top: 0; }
.row > div:not(.marker) { border-left: 1px solid #dee2e6; padding: 12px 0 0 12px; }
.row.stub > div { padding: 0 !important; }
.row > div:nth-child(3) { padding-left: 12.500px !important; }
.row > div:nth-child(4) { padding: 15px 0 0 12.500px !important; }
.row > .play { padding-top: 17px !important; }
.marker { position: absolute; left: 1px; top: -4px; width: 954px; height: 62px; border: 2px solid #0ff; filter: drop-shadow(2px 2px 1px rgba(0, 0, 0, .42)); }

.scrollbar { width: 17px; background: #f0f0f0; display: flex; flex-direction: column; align-items: center; padding: 7px 0; }
.arrow { border: 4px solid transparent; width: 0; height: 0; }
.upward { border-bottom-color: #505050; border-top: 0; }
.downward { border-top-color: #505050; border-bottom: 0; margin-top: auto; }
.thumb { width: 13px; height: 134px; background: #c1c1c1; margin-top: 377px; }
.pointer { position: absolute; left: 1317px; top: 337px; }

.taskbar { height: 40px; background: #17181a; display: flex; align-items: center; flex: none; color: #fff; }
.start { width: 48px; display: flex; justify-content: center; }
.searchbox { width: 344px; height: 40px; border: 1px solid #5a5a5a; background: #333; display: flex; align-items: center; padding-left: 10px; font-size: 14.500px; color: #dedede; }
.searchbox > .fit { margin-left: 11px; }
.scene { margin-left: auto; width: 76px; height: 38px; overflow: hidden; }
.slot { width: 48px; height: 40px; display: flex; align-items: center; justify-content: center; flex: none; position: relative; }
.slot.wide { width: 50px; padding-right: 2px; }
.slot.pinned { width: 49px; }
.slot.open::after { content: ""; position: absolute; left: 5px; right: 4px; bottom: 0; height: 2px; background: #76b9ed; }
.slot.current::before { content: ""; position: absolute; left: 1px; right: 0; top: 0; bottom: 0; background: #48494b; }
.slot.current::after { left: 1px; right: 0; }
.slot.current svg { position: relative; }
.weather { display: flex; align-items: center; gap: 9px; margin-left: 26px; width: 73px; font-size: 14px; }
.tray { display: flex; }
.tray span { width: 24px; display: flex; justify-content: center; }
.clock { width: 63px; display: flex; flex-direction: column; align-items: center; font-size: 12px; line-height: 17.500px; padding-bottom: 1px; }
.note { width: 42px; display: flex; justify-content: center; }
.desktop { width: 5px; height: 40px; margin-left: auto; border-left: 1px solid #6b6b6b; }
</style>
